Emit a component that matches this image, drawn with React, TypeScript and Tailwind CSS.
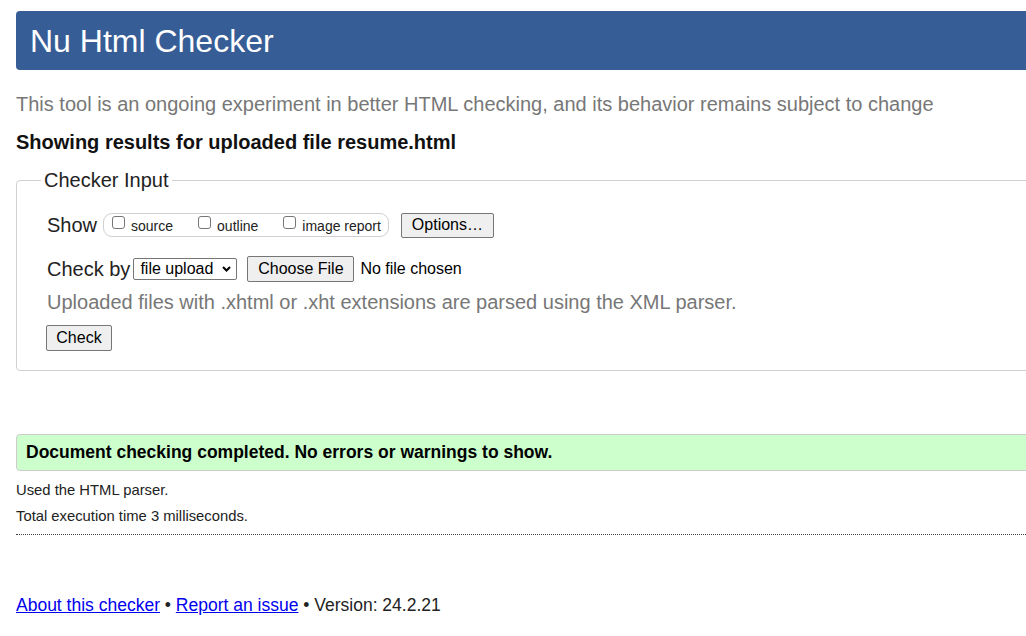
import React from "react"

function Box() {
  return <span className="inline-block w-[13px] h-[13px] border border-[#767676] rounded-[3px] bg-white mb-[6px] shrink-0" />
}

function Option({ label }: { label: string }) {
  return (
    <span className="flex items-center">
      <Box />
      <span className="ml-[6px] mt-[2px] text-[14px] leading-none">{label}</span>
    </span>
  )
}

function Btn({ children, className = "" }: { children: React.ReactNode; className?: string }) {
  return (
    <button className={"flex items-center justify-center bg-[#efefef] border border-[#767676] rounded-[2px] text-[16px] leading-none text-black " + className}>
      {children}
    </button>
  )
}

export default function App() {
  return (
    <div className="w-[1026px] h-[636px] overflow-hidden bg-white text-[#222] font-['Liberation_Sans',Arial,sans-serif]">
      <div className="w-[1100px] pl-4 pt-[11px]">
        <header className="h-[59px] rounded-l-[4px] bg-[#365d95] pl-[14px] flex items-center">
          <h1 className="text-white text-[32px] leading-none">Nu Html Checker</h1>
        </header>

        <p className="mt-[22px] text-[20px] leading-[24px] text-[#777]">
          This tool is an ongoing experiment in better HTML checking, and its behavior remains subject to change
        </p>
        <p className="mt-[14px] text-[20px] leading-[24px] font-bold text-[#111]">
          Showing results for uploaded file resume.html
        </p>

        <fieldset className="mt-[14px] border border-[#d0d0d0] rounded-[4px] pl-[24px] pb-[19px]">
          <legend className="px-[3px] text-[20px] leading-[24px]">Checker Input</legend>
          <div className="pl-[6px] pt-[20px]">
            <div className="flex items-center h-[26px]">
              <span className="text-[20px] leading-none">Show</span>
              <span className="ml-[6px] flex items-center gap-[25px] h-[24px] border border-[#d0d0d0] rounded-[9px] pl-[8px] pr-[7px]">
                <Option label="source" />
                <Option label="outline" />
                <Option label="image report" />
              </span>
              <Btn className="ml-[12px] w-[93px] h-[25px]">Options…</Btn>
            </div>

            <div className="flex items-center h-[26px] mt-[18px]">
              <span className="text-[20px] leading-none">Check by</span>
              <span className="ml-[3px] flex items-center w-[104px] h-[22px] border border-[#767676] rounded-[2px] pl-[6px] pr-[4px] text-[16px] leading-none text-black">
                <span>file upload</span>
                <svg className="ml-auto" width="11" height="8" viewBox="0 0 11 8" fill="none" stroke="#000" strokeWidth="2">
                  <path d="M2 2 5.5 5.5 9 2" />
                </svg>
              </span>
              <Btn className="ml-[10px] w-[107px] h-[26px]">Choose File</Btn>
              <span className="ml-[6px] text-[16px] leading-none text-black">No file chosen</span>
            </div>

            <p className="mt-[8px] text-[20px] leading-[24px] text-[#777]">
              Uploaded files with .xhtml or .xht extensions are parsed using the XML parser.
            </p>

            <Btn className="mt-[11px] -ml-px w-[66px] h-[26px]">Check</Btn>
          </div>
        </fieldset>

        <div className="mt-[63px] h-[37px] flex items-center border border-[#ccc] rounded-l-[4px] bg-[#ccffcc] pl-[9px]">
          <span className="font-bold text-[17.5px] leading-none text-black">
            Document checking completed. No errors or warnings to show.
          </span>
        </div>

        <p className="mt-[9px] text-[14.8px] leading-[20px]">Used the HTML parser.</p>
        <p className="mt-[6px] text-[14.8px] leading-[20px]">Total execution time 3 milliseconds.</p>
        <div className="mt-[8px] border-t border-dotted border-[#444]" />

        <p className="mt-[58px] text-[17.5px] leading-[24px]">
          <a href="#" className="text-[#0000ee] underline">About this checker</a>
          {" • "}
          <a href="#" className="text-[#0000ee] underline">Report an issue</a>
          {" • Version: 24.2.21"}
        </p>
      </div>
    </div>
  )
}
